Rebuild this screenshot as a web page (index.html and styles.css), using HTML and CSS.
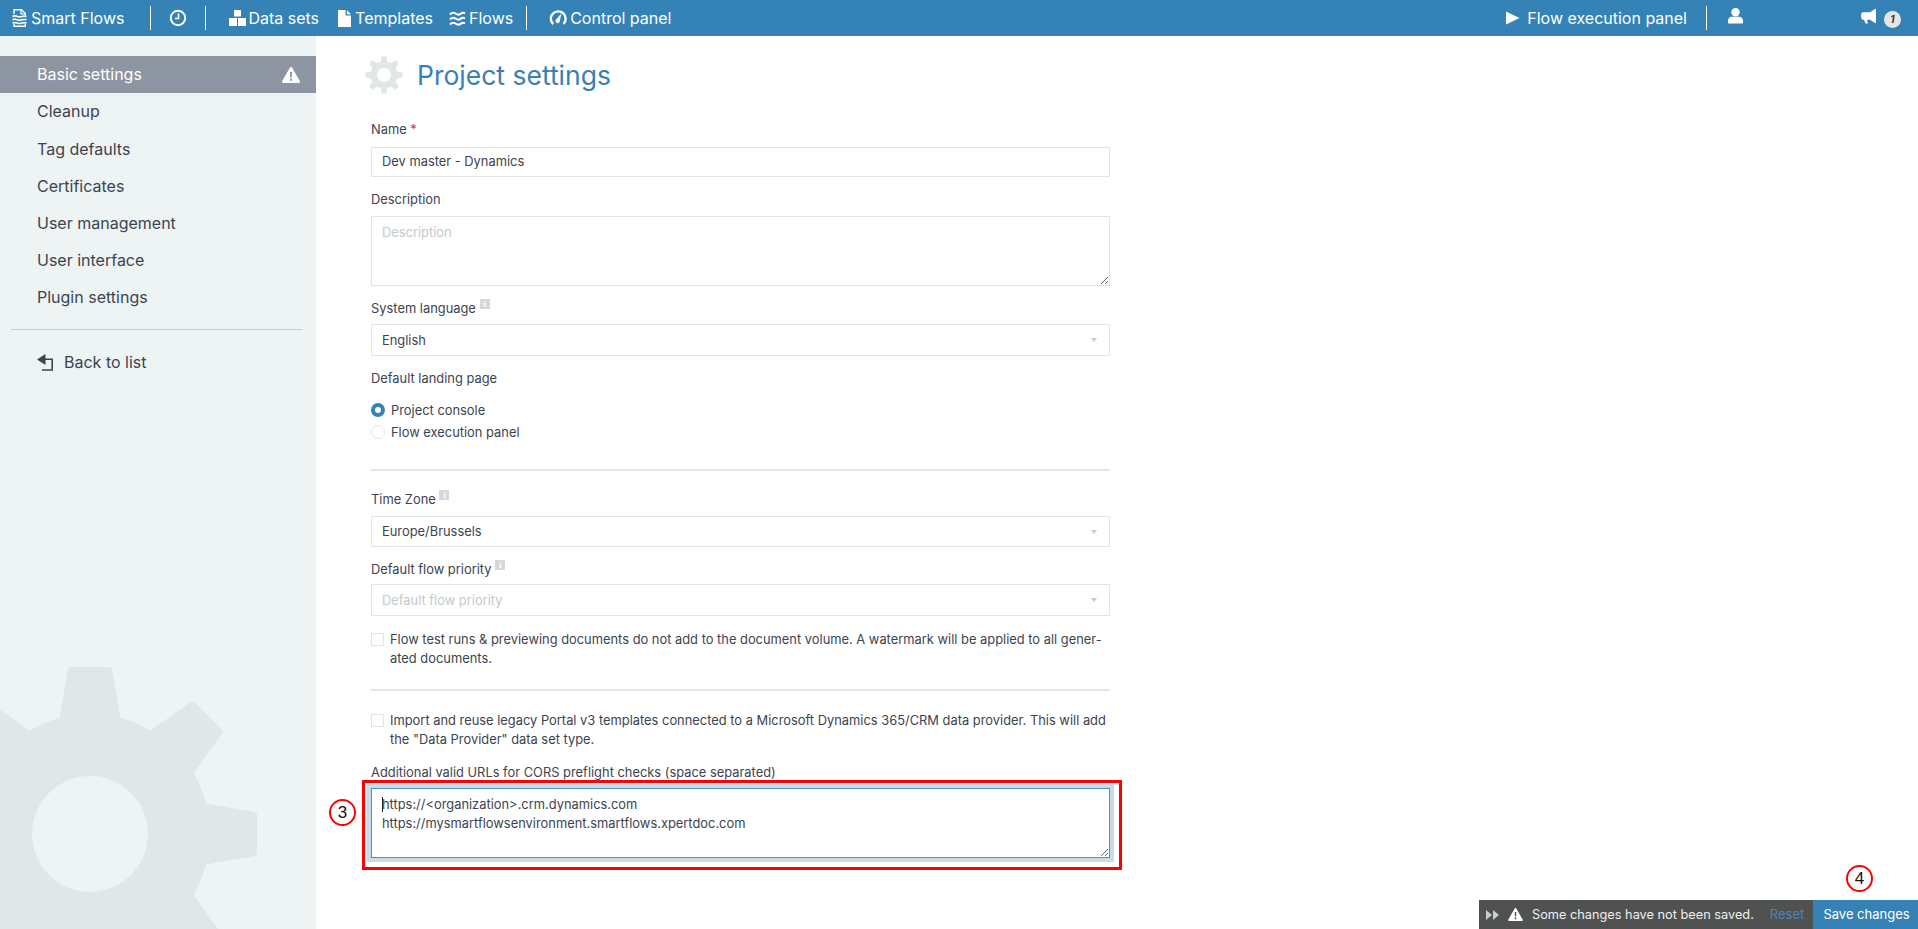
FILE: index.html
```html
<!DOCTYPE html>
<html lang="en">
<head>
<meta charset="utf-8">
<title>Project settings</title>
<link rel="stylesheet" href="styles.css">
</head>
<body>
<svg class="defs" width="0" height="0" aria-hidden="true">
  <defs>
    <g id="gear">
      <circle r="120"/>
      <g id="gear-half">
        <path id="tooth" d="M-31 -112 L-22 -165 Q-21 -167 -19 -167 L19 -167 Q21 -167 22 -165 L31 -112 Z"/>
        <use href="#tooth" transform="rotate(45)"/>
        <use href="#tooth" transform="rotate(90)"/>
        <use href="#tooth" transform="rotate(135)"/>
      </g>
      <use href="#gear-half" transform="rotate(180)"/>
    </g>
  </defs>
</svg>
<header class="topbar">
  <a class="nav-item brand">
    <svg class="ico" width="15" height="18" viewBox="0 0 15 18"><path d="M2 5V.7h7.500l3.800 3.800V6.500M2 14.500v2.800h11.300v-2.500" fill="none" stroke="#fff" stroke-width="1.400"/><path d="M9 .7v4.300h4.300" fill="none" stroke="#fff" stroke-width="1.200"/><path d="M.5 7.500c3-2 5 .8 7.500.4s4-1.600 6.500-.4M.5 10.800c3-2 5 .8 7.500.4s4-1.600 6.500-.4M.5 14.100c3-2 5 .8 7.500.4s4-1.600 6.500-.4" fill="none" stroke="#fff" stroke-width="1.600"/></svg>
    <span>Smart Flows</span>
  </a>
  <span class="sep sep-a"></span>
  <svg class="ico clock" width="18" height="18" viewBox="0 0 18 18"><circle cx="9" cy="9" r="7.200" fill="none" stroke="#fff" stroke-width="2"/><path d="M9.500 4.500v5H6" fill="none" stroke="#fff" stroke-width="1.600"/></svg>
  <span class="sep sep-b"></span>
  <a class="nav-item data">
    <svg class="ico" width="17" height="16" viewBox="0 0 17 16"><path d="M5 0h7v6.500H5zM0 8h8v8H0zM9 8h8v8H9z" fill="#fff"/></svg>
    <span>Data sets</span>
  </a>
  <a class="nav-item tmpl">
    <svg class="ico" width="13" height="17" viewBox="0 0 13 17"><path d="M0 0h7.500v5.500H13V17H0zM8.800 0L13 4.200H8.800z" fill="#fff"/></svg>
    <span>Templates</span>
  </a>
  <a class="nav-item flows">
    <svg class="ico" width="17" height="15" viewBox="0 0 17 15"><path d="M1 3.500c2-2.400 3.500-2.400 5.500-1s3.500 1.600 5 .4 2.800-1.500 4.500-.6M1 8.500c2-2.400 3.500-2.400 5.500-1s3.500 1.600 5 .4 2.800-1.500 4.500-.6M1 13.500c2-2.400 3.500-2.400 5.500-1s3.500 1.600 5 .4 2.800-1.500 4.500-.6" fill="none" stroke="#fff" stroke-width="2"/></svg>
    <span>Flows</span>
  </a>
  <span class="sep sep-c"></span>
  <a class="nav-item panel">
    <svg class="ico" width="18" height="18" viewBox="0 0 18 18"><path d="M4.200 15.200A7.400 7.400 0 1 1 14.500 15" fill="none" stroke="#fff" stroke-width="2.400"/><path d="M12.300 4.500L10.800 12.500a2.200 2.200 0 1 1-3.500-2.300z" fill="#fff"/></svg>
    <span>Control panel</span>
  </a>
  <span class="grow"></span>
  <a class="nav-item exec">
    <svg class="ico" width="14" height="14" viewBox="0 0 14 14"><path d="M0 .5L13.500 7 0 13.500z" fill="#fff"/></svg>
    <span>Flow execution panel</span>
  </a>
  <span class="sep sep-d"></span>
  <svg class="ico user" width="15" height="16" viewBox="0 0 15 16"><circle cx="7.500" cy="4.300" r="4.200" fill="#fff"/><path d="M0 15.500v-3c0 -2.500 2 -3.800 3.500 -3.800h8c1.500 0 3.500 1.300 3.500 3.800v3z" fill="#fff"/></svg>
  <svg class="ico horn" width="16" height="15" viewBox="0 0 16 15"><path d="M15 0v14l-1 0-5-3.300H6l1 3.800H4.500L3 10.700H2C.8 10.700 0 9 0 7s.8-3.700 2-3.700h7L14 0z" fill="#fff"/></svg>
  <span class="badge">1</span>
</header>

<div class="shell">
  <aside class="sidebar">
    <svg class="side-gear" width="340" height="340" viewBox="-170 -170 340 340" aria-hidden="true">
      <use href="#gear" fill="#dfe7e7"/>
      <circle r="58" fill="#eef3f4"/>
    </svg>
    <nav class="side-nav">
      <a class="side-link active"><span>Basic settings</span>
        <svg width="18" height="16" viewBox="0 0 18 16"><path d="M9 0c.5 0 .8.300 1 .6l7.800 13.500c.4.800 0 1.900-1 1.900H1.200c-1 0-1.400-1.100-1-1.900L8 .6C8.200.3 8.500 0 9 0z" fill="#fff"/><path d="M8 5h2l-.2 5.500H8.200zM8 11.700h2v2H8z" fill="#8c95a1"/></svg>
      </a>
      <a class="side-link">Cleanup</a>
      <a class="side-link tag">Tag defaults</a>
      <a class="side-link">Certificates</a>
      <a class="side-link">User management</a>
      <a class="side-link">User interface</a>
      <a class="side-link">Plugin settings</a>
    </nav>
    <hr class="side-rule">
    <a class="back-link">
      <svg width="16" height="17" viewBox="0 0 16 17"><path d="M0 5.500L8.500 0v11z" fill="#3d4450"/><path d="M8 5.200h7.200v10.800H5" fill="none" stroke="#3d4450" stroke-width="1.600"/></svg>
      <span>Back to list</span>
    </a>
  </aside>

  <main class="content">
    <div class="title-row">
      <svg class="title-gear" width="38" height="38" viewBox="-170 -170 340 340" aria-hidden="true">
        <use href="#gear" fill="#e1e7e7"/>
        <circle r="62" fill="#fff"/>
      </svg>
      <h1>Project settings</h1>
    </div>
    <form class="form">
      <label class="lbl lbl-name">Name <em>*</em></label>
      <input class="ctl ctl-name" type="text" value="Dev master - Dynamics">
      <label class="lbl lbl-next">Description</label>
      <textarea class="ctl area area-desc" placeholder="Description"></textarea>
      <label class="lbl lbl-lang">System language <i class="info">i</i></label>
      <div class="ctl sel sel-lang"><span>English</span><b class="caret"></b></div>
      <label class="lbl lbl-next">Default landing page</label>
      <div class="radios">
        <div class="opt"><span class="radio on"></span>Project console</div>
        <div class="opt"><span class="radio"></span>Flow execution panel</div>
      </div>
      <hr class="rule rule-a">
      <label class="lbl lbl-tz">Time Zone <i class="info">i</i></label>
      <div class="ctl sel"><span>Europe/Brussels</span><b class="caret"></b></div>
      <label class="lbl lbl-prio">Default flow priority <i class="info">i</i></label>
      <div class="ctl sel muted sel-prio"><span>Default flow priority</span><b class="caret"></b></div>
      <div class="check check-a"><span class="box"></span><p>Flow test runs &amp; previewing documents do not add to the document volume. A watermark will be applied to all gener-<br>ated documents.</p></div>
      <hr class="rule rule-b">
      <div class="check check-b"><span class="box"></span><p>Import and reuse legacy Portal v3 templates connected to a Microsoft Dynamics 365/CRM data provider. This will add<br>the "Data Provider" data set type.</p></div>
      <label class="lbl lbl-cors">Additional valid URLs for CORS preflight checks (space separated)</label>
      <div class="cors-wrap">
        <textarea class="ctl area area-cors" spellcheck="false">https://&lt;organization&gt;.crm.dynamics.com
https://mysmartflowsenvironment.smartflows.xpertdoc.com</textarea>
        <span class="caret-line"></span>
        <span class="callout-box"></span>
        <span class="callout callout-3">3</span>
      </div>
    </form>
  </main>
</div>

<span class="callout callout-4">4</span>
<div class="savebar">
  <div class="save-msg">
    <svg width="13" height="10" viewBox="0 0 13 10"><path d="M0 0l6 5-6 5zM7 0l6 5-6 5z" fill="#c9cccc"/></svg>
    <svg width="15" height="13" viewBox="0 0 18 16"><path d="M9 0c.5 0 .8.300 1 .6l7.800 13.500c.4.800 0 1.900-1 1.900H1.200c-1 0-1.400-1.100-1-1.900L8 .6C8.200.3 8.500 0 9 0z" fill="#fff"/><path d="M8 5h2l-.2 5.500H8.200zM8 11.700h2v2H8z" fill="#505252"/></svg>
    <span class="msg">Some changes have not been saved.</span>
    <a class="reset">Reset</a>
  </div>
  <a class="save-btn">Save changes</a>
</div>
</body>
</html>
```
FILE: styles.css
```css
* { box-sizing: border-box; }
html, body { height: 100%; }
body {
  margin: 0;
  overflow: hidden;
  position: relative;
  display: flex;
  flex-direction: column;
  background: #fff;
  color: #3d4450;
  font: 12.880px/19px Inter, "Liberation Sans", sans-serif;
}
.defs { position: absolute; }

.topbar {
  flex: none;
  height: 36px;
  display: flex;
  align-items: center;
  background: #3583b6;
  color: #fff;
  font-size: 16px;
}
.nav-item { display: flex; align-items: center; }
.sep { width: 1px; height: 24px; background: #fff; }
.grow { flex: 1; }
.brand { margin-left: 12px; gap: 4px; }
.sep-a { margin-left: 26px; }
.clock { margin-left: 18px; }
.sep-b { margin-left: 18px; }
.data { margin-left: 23px; gap: 2px; }
.tmpl { margin-left: 19px; gap: 4px; }
.flows { margin-left: 16px; gap: 3px; }
.sep-c { margin-left: 13px; }
.panel { margin-left: 22px; gap: 3px; }
.exec { gap: 7px; }
.sep-d { margin-left: 19px; }
.user { margin-left: 21px; margin-top: -4px; }
.horn { margin-left: 118px; margin-top: -3px; }
.badge {
  width: 17px;
  height: 17px;
  margin: 3px 17px 0 7px;
  border-radius: 50%;
  background: #e4e6e6;
  color: #333;
  font-size: 10px;
  font-weight: 700;
  font-style: italic;
  line-height: 17px;
  text-align: center;
}

.shell { flex: 1; display: flex; min-height: 0; }

.sidebar {
  flex: none;
  width: 316px;
  position: relative;
  overflow: hidden;
  padding-top: 20px;
  background: #eef3f4;
  font-size: 16px;
}
.side-gear { position: absolute; left: -80px; top: 628px; }
.side-nav { position: relative; display: flex; flex-direction: column; }
.side-link {
  height: 37px;
  padding: 0 16px 0 37px;
  display: flex;
  align-items: center;
  justify-content: space-between;
}
.side-link.tag { margin-top: 1px; }
.side-link.active { background: #8c95a1; color: #fff; }
.side-rule {
  position: relative;
  height: 1px;
  margin: 13px 13px 0 11px;
  border: 0;
  background: #c9cdce;
}
.back-link {
  position: relative;
  display: flex;
  align-items: center;
  gap: 11px;
  margin: 23px 0 0 37px;
}

.content { flex: 1; padding: 20px 0 0 49px; min-width: 0; }
.title-row { display: flex; align-items: center; height: 38px; gap: 14px; }
h1 {
  margin: 0;
  color: #3a7fb4;
  font-size: 26.500px;
  font-weight: 400;
  line-height: 38px;
}
.form { width: 739px; margin-left: 6px; }
.lbl { display: block; height: 19px; }
.lbl em { color: #d33; font-style: normal; }
.lbl-name { margin-top: 26px; margin-bottom: 8px; }
.lbl-next { margin-top: 13px; margin-bottom: 7px; }
.lbl-lang { margin-top: 13px; margin-bottom: 6px; }
.lbl-tz { margin-bottom: 7px; }
.lbl-prio { margin-top: 13px; margin-bottom: 5px; }
.lbl-cors { margin-top: 14px; margin-bottom: 6px; }
.info {
  display: inline-block;
  width: 10px;
  height: 10px;
  margin-left: 0;
  vertical-align: 6px;
  background: #d6d9d9;
  color: #fff;
  font: 700 9px/10px "Liberation Serif", serif;
  text-align: center;
}
.ctl {
  display: block;
  width: 100%;
  height: 31px;
  padding: 0 10px;
  border: 1px solid #dfe6e6;
  border-radius: 0;
  outline: 0;
  background: #fff;
  color: #3d4450;
  font: 12.880px/19px Inter, "Liberation Sans", sans-serif;
}
.ctl-name { height: 30px; padding-bottom: 1px; }
.area { padding: 6px 10px; resize: vertical; }
.area::placeholder { color: #c4c9cc; }
.area-desc { height: 70px; }
.sel { display: flex; align-items: center; justify-content: space-between; padding-right: 12px; }
.sel-lang { height: 32px; }
.sel-prio { height: 32px; }
.muted { color: #c4c9cc; }
.caret {
  width: 0;
  height: 0;
  border: 3px solid transparent;
  border-top: 4px solid #c4c9cc;
  border-bottom: 0;
}
.radios { margin-top: 11px; }
.opt { display: flex; align-items: center; height: 22px; gap: 6px; }
.radio {
  width: 14px;
  height: 14px;
  border: 1px solid #dfe6e6;
  border-radius: 50%;
  background: #fff;
}
.radio.on { border: 4px solid #3583b6; }
.rule { height: 2px; margin: 0; border: 0; background: #dfe6e6; }
.rule-a { margin-top: 26px; margin-bottom: 19px; }
.rule-b { margin-top: 21px; margin-bottom: 20px; }
.check { display: flex; gap: 6px; white-space: nowrap; }
.check-a { margin-top: 14px; }
.check p { margin: 0; }
.box {
  flex: none;
  width: 13px;
  height: 13px;
  margin-top: 3px;
  border: 1px solid #dfe6e6;
  background: #fff;
}
.cors-wrap { position: relative; }
.area-cors {
  height: 70px;
  border-color: #4c93c3;
  box-shadow: 0 0 0 4px #c9dcea;
}
.caret-line {
  position: absolute;
  left: 11px;
  top: 9px;
  width: 1px;
  height: 15px;
  background: #222;
}
.callout-box {
  position: absolute;
  left: -9px;
  top: -8px;
  width: 760px;
  height: 90px;
  border: 3px solid #f00;
}
.callout {
  width: 27px;
  height: 27px;
  border: 2px solid #f00;
  border-radius: 50%;
  background: #fff;
  color: #111;
  font: 17px/23px "Liberation Sans", sans-serif;
  text-align: center;
}
.callout-3 { position: absolute; left: -42px; top: 11px; }
.callout-4 { position: absolute; left: 1846px; top: 865px; }

.savebar {
  position: absolute;
  right: 0;
  bottom: 0;
  height: 29px;
  display: flex;
  color: #fff;
  font-size: 13px;
}
.save-msg {
  width: 334px;
  display: flex;
  align-items: center;
  padding-left: 7px;
  background: #505252;
}
.save-msg svg + svg { margin-left: 9px; }
.msg { margin-left: 9px; color: #eee; font-size: 12.750px; }
.reset { margin-left: 16px; color: #4a83b8; }
.save-btn {
  width: 105px;
  display: flex;
  align-items: center;
  justify-content: center;
  padding-left: 2px;
  background: #3583b6;
}
```
